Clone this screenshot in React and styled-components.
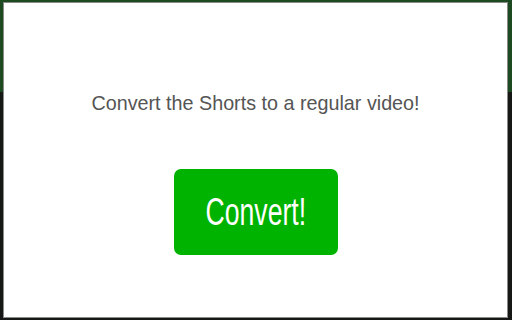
import React from 'react';
import styled, { createGlobalStyle } from 'styled-components';

const GlobalStyle = createGlobalStyle`
  html, body {
    margin: 0;
    padding: 0;
  }
  body {
    width: 512px;
    height: 320px;
    overflow: hidden;
    background: linear-gradient(#1e4a22 0, #1e4a22 92px, #161816 92px, #161816 100%);
    font-family: "Liberation Sans", Arial, sans-serif;
  }
`;

const Frame = styled.div`
  box-sizing: border-box;
  width: 512px;
  height: 320px;
  padding: 2px 4px 2px 3px;
  display: flex;
`;

const Panel = styled.div`
  flex: 1;
  background: #ffffff;
  border: 1px solid #8a8a8a;
  display: flex;
  flex-direction: column;
  align-items: center;
  padding-top: 88px;
`;

const Message = styled.p`
  margin: 0;
  font-size: 21px;
  line-height: 24px;
  color: #555555;
  white-space: nowrap;
  transform: scaleX(0.94);
`;

const ConvertButton = styled.button`
  margin-top: 54px;
  width: 164px;
  height: 86px;
  border: none;
  border-radius: 7px;
  background: #00b300;
  color: #ffffff;
  font-family: inherit;
  font-size: 38px;
  cursor: pointer;
`;

const Label = styled.span`
  display: inline-block;
  transform: scaleX(0.7);
`;

export default function App() {
  return (
    <>
      <GlobalStyle />
      <Frame>
        <Panel>
          <Message>Convert the Shorts to a regular video!</Message>
          <ConvertButton>
            <Label>Convert!</Label>
          </ConvertButton>
        </Panel>
      </Frame>
    </>
  );
}
